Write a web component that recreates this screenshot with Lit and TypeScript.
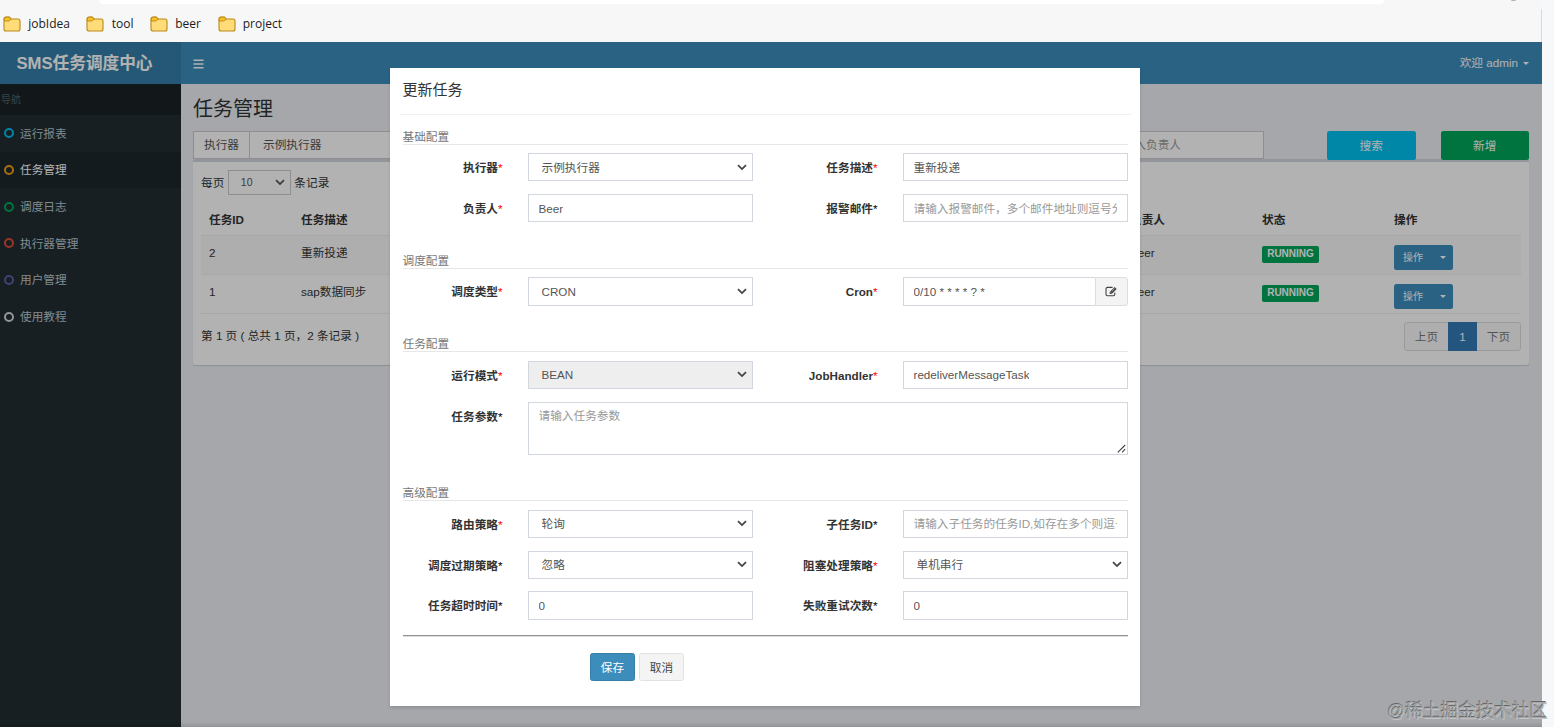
import { LitElement, html, css, svg, nothing } from "lit";
import { customElement } from "lit/decorators.js";

type Field = {
  label: string;
  red?: boolean;
  kind: "input" | "select" | "cron" | "textarea";
  value?: string;
  placeholder?: string;
  disabled?: boolean;
};
type Section = { title: string; rows: Field[][] };

const bookmarks = ["jobIdea", "tool", "beer", "project"];

const menu = [
  { text: "运行报表", tone: "aqua" },
  { text: "任务管理", tone: "yellow", active: true },
  { text: "调度日志", tone: "green" },
  { text: "执行器管理", tone: "red" },
  { text: "用户管理", tone: "purple" },
  { text: "使用教程", tone: "gray" },
];

const jobs = [
  { id: "2", desc: "重新投递", owner: "Beer" },
  { id: "1", desc: "sap数据同步", owner: "Beer" },
];

const sections: Section[] = [
  {
    title: "基础配置",
    rows: [
      [
        { label: "执行器", red: true, kind: "select", value: "示例执行器" },
        { label: "任务描述", red: true, kind: "input", value: "重新投递" },
      ],
      [
        { label: "负责人", red: true, kind: "input", value: "Beer" },
        { label: "报警邮件", kind: "input", placeholder: "请输入报警邮件，多个邮件地址则逗号分隔" },
      ],
    ],
  },
  {
    title: "调度配置",
    rows: [
      [
        { label: "调度类型", red: true, kind: "select", value: "CRON" },
        { label: "Cron", red: true, kind: "cron", value: "0/10 * * * * ? *" },
      ],
    ],
  },
  {
    title: "任务配置",
    rows: [
      [
        { label: "运行模式", red: true, kind: "select", value: "BEAN", disabled: true },
        { label: "JobHandler", red: true, kind: "input", value: "redeliverMessageTask" },
      ],
      [{ label: "任务参数", kind: "textarea", placeholder: "请输入任务参数" }],
    ],
  },
  {
    title: "高级配置",
    rows: [
      [
        { label: "路由策略", red: true, kind: "select", value: "轮询" },
        { label: "子任务ID", kind: "input", placeholder: "请输入子任务的任务ID,如存在多个则逗号分隔" },
      ],
      [
        { label: "调度过期策略", kind: "select", value: "忽略" },
        { label: "阻塞处理策略", red: true, kind: "select", value: "单机串行" },
      ],
      [
        { label: "任务超时时间", kind: "input", value: "0" },
        { label: "失败重试次数", kind: "input", value: "0" },
      ],
    ],
  },
];

const chevron = html`<svg class="chevron" width="10" height="7" viewBox="0 0 10 7">
  ${svg`<path d="M1 1.2 L5 5.1 L9 1.2" fill="none" stroke="currentColor" stroke-width="1.8"/>`}
</svg>`;

const folder = html`<svg width="18" height="16" viewBox="0 0 18 16">
  ${svg`<path d="M1 3 Q1 1 3 1 H6.3 L8.2 3 H15 Q17 3 17 5 V13 Q17 15 15 15 H3 Q1 15 1 13 Z" fill="#ffdc78" stroke="#b98a1a" stroke-width="1.1"/>
  <path d="M1.2 5 H6.2 L8.2 3 L6.3 1.2 H3 Q1.2 1.2 1.2 3 Z" fill="#f6c026" stroke="#b98a1a" stroke-width=".9"/>`}
</svg>`;

@customElement("job-form")
export class JobForm extends LitElement {
  static styles = css`
    :host { display: block; box-sizing: border-box; width: 750px; height: 638px; background: #fff; color: #333;
      box-shadow: 0 2px 3px rgba(0,0,0,.125); padding: 0 12.5px; }
    .title { height: 46.5px; line-height: 44px; font-size: 15px; border-bottom: 1px solid #f1f1f1; margin: 0 -3px 12px -3px; padding-left: 3px; box-sizing: border-box; }
    .section { padding-bottom: 16px; }
    .section:last-of-type { padding-bottom: 0; }
    .legend { height: 18px; box-sizing: border-box; line-height: 19px; border-bottom: 1px solid #e7e7e7; color: #777; margin-bottom: 8.6px; }
    .row { display: grid; grid-template-columns: 100px 225px 100px 225px; column-gap: 25px; margin-bottom: 12.5px; }
    .label { text-align: right; font-weight: 700; line-height: 29.3px; height: 28.3px; white-space: nowrap; }
    .star { color: #000; font-weight: 400; }
    .star.red { color: red; }
    .control { box-sizing: border-box; height: 28.33px; border: 1px solid #d2d6de; padding: 0 10px; line-height: 27px; color: #555;
      display: flex; align-items: center; justify-content: space-between; background: #fff; min-width: 0; }
    .control.select { padding: 0 5px 0 13px; }
    .control.disabled { background: #eee; }
    .control.textarea { grid-column: 2 / 5; height: 53px; align-items: flex-start; padding-right: 1px; line-height: 25px; }
    .text { overflow: hidden; white-space: nowrap; text-overflow: clip; }
    .hint { color: #999; }
    .chevron { color: #444; flex: none; }
    .grip { align-self: flex-end; margin-bottom: 1px; }
    .group { display: flex; }
    .group .control { flex: 1; border-right: 0; }
    .addon { box-sizing: border-box; width: 33px; border: 1px solid #ddd; background: #f4f4f4; border-radius: 0 3px 3px 0; display: flex; align-items: center; justify-content: center; }
    .form-end { padding-top: 2.4px; }
    .rule { height: 1px; background: #919191; border-bottom: 1px solid #ddd; }
    .actions { display: flex; gap: 4px; padding: 16px 0 0 187.5px; }
    .btn { box-sizing: border-box; width: 45px; height: 28px; line-height: 27px; text-align: center; border-radius: 2.5px; border: 1px solid #e2e2e2; background: #f4f4f4; color: #444; }
    .btn.primary { background: #3c8dbc; border-color: #367fa9; color: #fff; }
  `;

  control(f: Field) {
    const text = html`<span class="text ${f.placeholder ? "hint" : ""}">${f.value ?? f.placeholder}</span>`;
    if (f.kind === "cron")
      return html`<div class="group">
        <div class="control">${text}</div>
        <div class="addon">
          <svg width="13" height="11" viewBox="0 0 13 11">
            <path d="M9.8 6.4 V8.3 Q9.8 9.8 8.3 9.8 H2.5 Q1 9.8 1 8.3 V2.9 Q1 1.4 2.5 1.4 H7.6" fill="none" stroke="#444" stroke-width="1.1" />
            <path d="M4.7 5.9 L9.7 .9 L11.7 2.9 L6.7 7.9 H4.7 Z" fill="#444" />
            <path d="M5.6 6.3 L6.5 7.1" stroke="#f4f4f4" stroke-width=".8" />
            <path d="M6.9 5.2 L9.6 2.5" stroke="#ddd" stroke-width=".6" />
          </svg>
        </div>
      </div>`;
    return html`<div class="control ${f.kind} ${f.disabled ? "disabled" : ""}">
      ${text}
      ${f.kind === "select" ? chevron : nothing}
      ${f.kind === "textarea"
        ? html`<svg class="grip" width="9" height="9" viewBox="0 0 9 9"><path d="M.8 8.4 L8.2 1 M5 8.4 L8.2 5.2" stroke="#444" stroke-width="1.1" fill="none" /></svg>`
        : nothing}
    </div>`;
  }

  render() {
    return html`
      <div class="title">更新任务</div>
      ${sections.map(
        (s) => html`<div class="section">
          <div class="legend">${s.title}</div>
          ${s.rows.map(
            (r) => html`<div class="row">
              ${r.map((f) => html`<div class="label">${f.label}<span class="star ${f.red ? "red" : ""}">*</span></div>${this.control(f)}`)}
            </div>`
          )}
        </div>`
      )}
      <footer class="form-end">
        <div class="rule"></div>
        <div class="actions"><div class="btn primary">保存</div><div class="btn">取消</div></div>
      </footer>
    `;
  }
}

@customElement("app-root")
export class AppRoot extends LitElement {
  static styles = css`
    :host { display: block; position: relative; width: 1554px; height: 727px; overflow: hidden; background: #f7f8fa;
      font: 11.67px/16.67px "Liberation Sans", "Noto Sans CJK SC", sans-serif; color: #333; }
    .browser { height: 42px; width: 1542px; box-sizing: border-box; background: #f7f7f7; display: flex; flex-direction: column; }
    .address { height: 4px; margin: 0 158px 0 99px; background: #fff; border-radius: 0 0 6px 6px; }
    .bookmarks { display: flex; gap: 16.6px; padding: 11px 0 0 3px; font: 12px/17px "Open Sans", "Noto Sans", sans-serif; color: #1b1b1b; }
    .bookmark { display: flex; gap: 7.2px; align-items: center; }
    .page { position: relative; width: 1542px; height: 685px; background: #ecf0f5; display: flex; flex-direction: column; }
    .header { display: flex; height: 42px; background: #3c8dbc; color: #fff; }
    .logo { width: 181px; background: #367fa9; text-align: center; font-size: 16.67px; line-height: 44px; font-weight: 700; padding-right: 12px; box-sizing: border-box; }
    .navbar { flex: 1; display: flex; align-items: center; justify-content: space-between; padding: 1px 13px 0 12px; }
    .user { display: flex; align-items: center; gap: 5px; }
    .caret { width: 0; height: 0; border: 3px solid transparent; border-top-color: #fff; border-bottom: 0; }
    .body { flex: 1; display: flex; }
    .sidebar { width: 181px; background: #222d32; color: #b8c7ce; }
    .navhead { height: 31px; line-height: 32px; background: #1a2226; color: #4b646f; font-size: 10px; padding-left: 1px; box-sizing: border-box; }
    .item { display: flex; align-items: center; gap: 6px; padding-left: 4px; height: 36.67px; }
    .item span { padding-top: 1.4px; }
    .item.active { background: #1e282c; color: #fff; }
    .ring { box-sizing: border-box; width: 10px; height: 10px; border: 2px solid; border-radius: 50%; }
    .aqua { color: #00c0ef; } .yellow { color: #f39c12; } .green { color: #00a65a; }
    .red { color: #dd4b39; } .purple { color: #605ca8; } .gray { color: #d2d6de; }
    .content { flex: 1; padding: 12px 13px 0 12px; }
    .heading { font-size: 20px; line-height: 26px; height: 35px; }
    .filters { display: flex; height: 28px; }
    .filter { display: flex; box-sizing: border-box; border: 1px solid #ccc; background: #fff; color: #555; line-height: 26px; }
    .filter.executor { width: 240px; }
    .filter .tag { width: 55px; text-align: center; border-right: 1px solid #ccc; color: #555; }
    .filter .val { padding-left: 13px; }
    .filter.owner { width: 164px; margin-left: 667px; padding-left: 10px; color: #999; }
    .btn { box-sizing: border-box; width: 88.5px; height: 29px; line-height: 29px; border-radius: 2.5px; color: #fff; text-align: center; position: relative; }
    .search { background: #00c0ef; margin-left: 63px; }
    .add { background: #00a65a; margin-left: 25px; }
    .box { border-top: 3px solid #d2d6de; border-radius: 2.5px; background: #fff; box-shadow: 0 1px 1px rgba(0,0,0,.15); height: 206px; padding: 8px; box-sizing: border-box; }
    .length { display: flex; gap: 3.5px; line-height: 25px; height: 34px; }
    .size { box-sizing: border-box; width: 63px; height: 25px; border: 1px solid #ccc; display: flex; align-items: center; justify-content: space-between; padding: 0 5px 0 12px; font-size: 10.5px; color: #555; }
    .table { border-bottom: 1px solid #f0f0f0; }
    .tr { display: grid; grid-template-columns: 92px 829px 132px 132px 1fr; height: 39px; }
    .tr > div { padding: 8.6px 8px 0; white-space: nowrap; }
    .tr.odd { background: #f9f9f9; border-top: 1px solid #f0f0f0; }
    .tr.even { border-top: 1px solid #f2f2f2; box-sizing: border-box; }
    .tr.odd { box-sizing: border-box; }
    .tr.th { height: 31px; font-weight: 700; }
    .tr.th > div { padding-top: 7.5px; }
    .badge { display: inline-block; background: #00a65a; color: #fff; font-weight: 700; font-size: 10px; line-height: 16px; height: 17px; width: 57px; text-align: center; border-radius: 2px; margin-top: 1px; }
    .split { display: flex; width: 59px; height: 25px; background: #3c8dbc; color: #fff; border-radius: 2.5px; align-items: center; font-size: 10px; line-height: 27px; }
    .split .main { width: 38px; text-align: center; }
    .split .drop { flex: 1; display: flex; justify-content: center; }
    .foot { display: flex; justify-content: space-between; padding-top: 8px; }
    .info { padding-top: 6px; }
    .pager { display: flex; box-sizing: border-box; width: 117px; height: 29px; line-height: 28px; border: 1px solid #ddd; border-radius: 3px; color: #777; text-align: center; background: #fafafa; }
    .pager .step { flex: 1; }
    .pager .cur { width: 29px; margin: -1px 0; background: #337ab7; color: #fff; line-height: 30px; }
    .backdrop { position: absolute; inset: 0; background: rgba(0,0,0,.3); }
    .dialog { position: absolute; left: 390px; top: 26px; }
    .edge { position: absolute; left: 0; right: 0; bottom: 0; height: 5px; background: linear-gradient(transparent, rgba(0,0,0,.12)); }
    .frame { position: absolute; left: 1541px; top: 9px; width: 1px; height: 33px; background: #d9d9d9; }
    .knob { position: absolute; left: 1510px; top: -5px; width: 7px; height: 6px; border-radius: 50%; background: #aaa; }
    .mark { position: absolute; left: 1387px; top: 699px; font-size: 17.8px; line-height: 24px; white-space: nowrap; color: #a4a6a8;
      text-shadow: -.6px -.6px 0 #686868, .8px .8px 0 #c3c5c6; }
  `;

  render() {
    return html`
      <div class="browser">
        <div class="address"></div>
        <div class="bookmarks">${bookmarks.map((b) => html`<div class="bookmark">${folder}<span>${b}</span></div>`)}</div>
      </div>
      <div class="page">
        <div class="header">
          <div class="logo">SMS任务调度中心</div>
          <div class="navbar">
            <svg width="11" height="10" viewBox="0 0 11 10"><path d="M.5 1.2 H10.5 M.5 5 H10.5 M.5 8.8 H10.5" stroke="#fff" stroke-width="1.5" /></svg>
            <div class="user"><span>欢迎 admin</span><i class="caret"></i></div>
          </div>
        </div>
        <div class="body">
          <div class="sidebar">
            <div class="navhead">导航</div>
            ${menu.map((m) => html`<div class="item ${m.active ? "active" : ""}"><i class="ring ${m.tone}"></i><span>${m.text}</span></div>`)}
          </div>
          <div class="content">
            <div class="heading">任务管理</div>
            <div class="filters">
              <div class="filter executor"><span class="tag">执行器</span><span class="val">示例执行器</span></div>
              <div class="filter owner">请输入负责人</div>
              <div class="btn search">搜索</div>
              <div class="btn add">新增</div>
            </div>
            <div class="box">
              <div class="length"><span>每页</span><div class="size"><span>10</span>${chevron}</div><span>条记录</span></div>
              <div class="table">
                <div class="tr th"><div>任务ID</div><div>任务描述</div><div>负责人</div><div>状态</div><div>操作</div></div>
                ${jobs.map(
                  (j, i) => html`<div class="tr ${i % 2 ? "even" : "odd"}">
                    <div>${j.id}</div><div>${j.desc}</div><div>${j.owner}</div>
                    <div><span class="badge">RUNNING</span></div>
                    <div><div class="split"><span class="main">操作</span><span class="drop"><i class="caret"></i></span></div></div>
                  </div>`
                )}
              </div>
              <div class="foot">
                <div class="info">第 1 页 ( 总共 1 页，2 条记录 )</div>
                <div class="pager"><span class="step">上页</span><span class="cur">1</span><span class="step">下页</span></div>
              </div>
            </div>
          </div>
        </div>
        <div class="backdrop"></div>
        <div class="edge"></div>
        <job-form class="dialog"></job-form>
      </div>
      <div class="frame"></div>
      <div class="knob"></div>
      <div class="mark">@稀土掘金技术社区</div>
    `;
  }
}
